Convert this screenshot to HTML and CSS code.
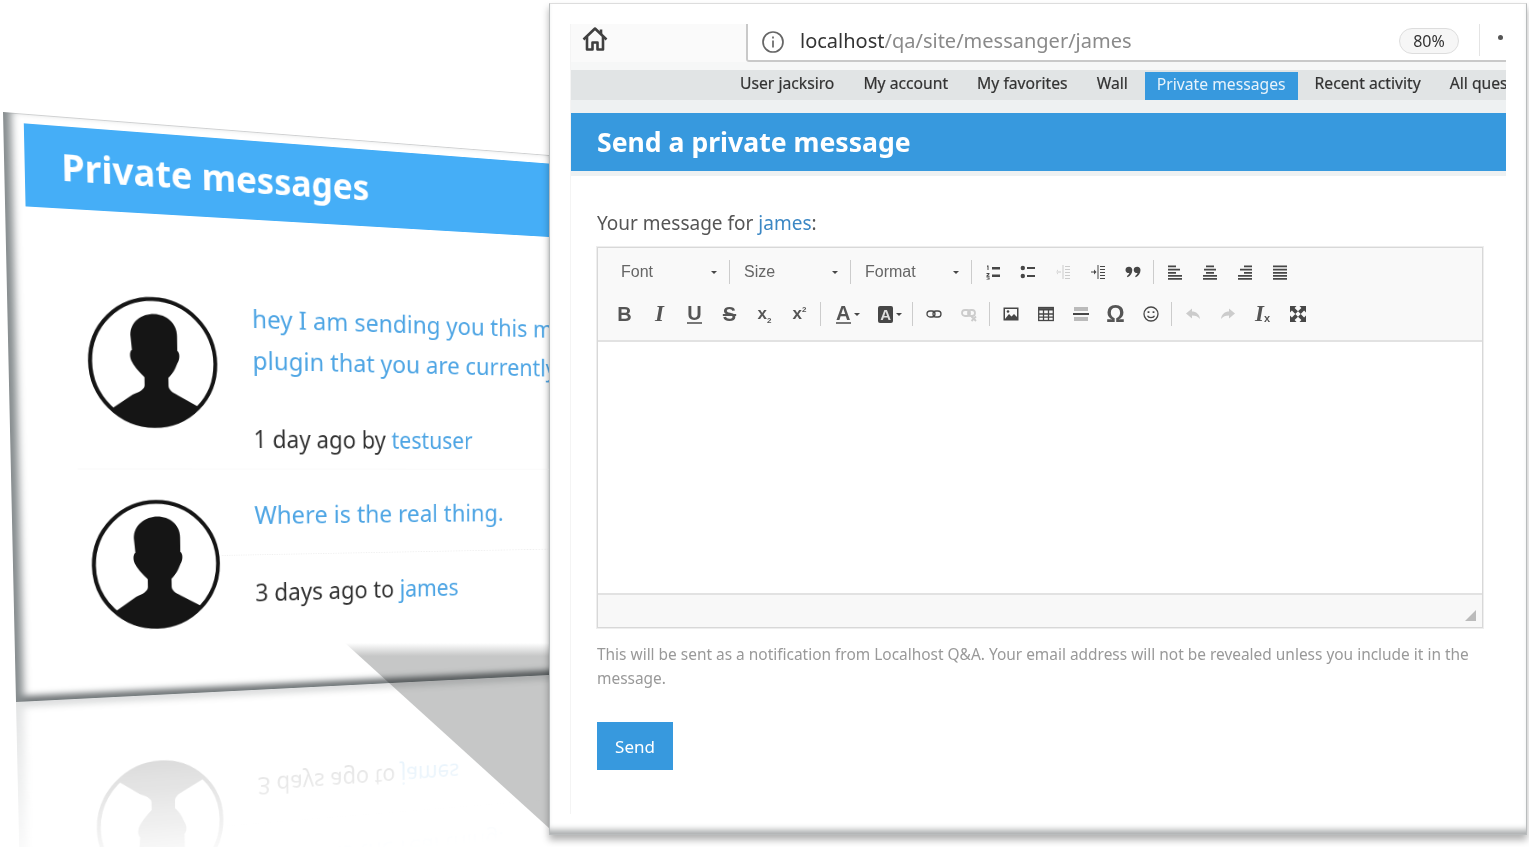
FILE: index.html
```html
<!DOCTYPE html>
<html lang="en">
<head>
    <meta charset="UTF-8">
    <title>Private messages</title>
    <link rel="stylesheet" href="styles.css">
</head>
<body>
    <svg class="defs" width="0" height="0">
        <symbol id="avatar" viewBox="0 0 100 100">
            <circle cx="50" cy="50" r="47" fill="#fff" stroke="#151515" stroke-width="3"/>
            <path fill="#151515" d="M51 14C60 14 68 20 68 30L68 41C70 42 70 47 68 50C66 55 64 58 61 61L61 67C61 70 64 72 68 74L83 82C75 92 63 97 50 97C37 97 26 92 19 84L34 74C39 72 43 70 43 67L43 61C40 58 36 54 34 50C32 47 32 42 34 41L33 30C33 20 42 14 51 14Z"/>
        </symbol>
    </svg>

    <!-- back window, tilted -->
    <section class="panel">
        <h2 class="panel-title">Private messages</h2>
        <div class="pm-row pm-row-first">
            <svg class="pm-avatar"><use href="#avatar"/></svg>
            <div>
                <p class="pm-text">hey I am sending you this message to tell you about the<br>plugin that you are currently using on your site</p>
                <p class="pm-meta pm-meta-first">1 day ago by <a>testuser</a></p>
            </div>
        </div>
        <div class="pm-row pm-row-second">
            <svg class="pm-avatar"><use href="#avatar"/></svg>
            <div>
                <p class="pm-text pm-text-short">Where is the real thing.</p>
                <p class="pm-meta">3 days ago to <a>james</a></p>
            </div>
        </div>
    </section>

    <div class="wedge"></div>

    <!-- front window -->
    <section class="window">
        <div class="page">
            <div class="browser-bar">
                <div class="home-box">
                    <svg width="28" height="28" viewBox="0 0 28 28" fill="none" stroke="#404040" stroke-width="2.6" stroke-linejoin="round"><path d="M2.500 14.500L14 3.500L25.500 14.500"/><path d="M20 4.500V9"/><path d="M6 12V24.500H11.500V17.500H16.500V24.500H22V12"/></svg>
                </div>
                <div class="address">
                    <svg width="24" height="24" viewBox="0 0 24 24" fill="none" stroke="#666" stroke-width="1.7"><circle cx="12" cy="12" r="10"/><path d="M12 10.500V17.500"/><path d="M12 6.500V8.500"/></svg>
                    <span class="url"><b>localhost</b>/qa/site/messanger/james</span>
                    <span class="zoom-pill">80%</span>
                </div>
                <div class="bar-end"><i></i></div>
            </div>

            <nav class="nav">
                <a>User jacksiro</a>
                <a>My account</a>
                <a>My favorites</a>
                <a>Wall</a>
                <a class="active">Private messages</a>
                <a>Recent activity</a>
                <a>All questions</a>
            </nav>

            <h1 class="title">Send a private message</h1>

            <div class="content">
                <p class="message-for">Your message for <a>james</a>:</p>

                <div class="editor">
                    <div class="toolbar">
                        <div class="tb-row tb-row-top">
                            <span class="tb-combo">Font<i class="caret"></i></span><span class="tb-sep"></span>
                            <span class="tb-combo">Size<i class="caret"></i></span><span class="tb-sep"></span>
                            <span class="tb-combo">Format<i class="caret"></i></span><span class="tb-sep"></span>
                            <span class="tb-btn"><svg viewBox="0 0 16 16"><path d="M2 1.500H3.500V6H2.500V2.700H2ZM1.500 9H4.500V10L3 11.700H4.600V12.700H1.400V11.800L3.200 10H1.500ZM1.500 13.400H4.600V15.500H1.500V14.900H3.600V14.700H2.400V14.200H3.600V14H1.500Z"/><path d="M7 3H15V5.500H7ZM7 10.500H15V13H7Z"/></svg></span>
                            <span class="tb-btn"><svg viewBox="0 0 16 16"><circle cx="2.800" cy="4" r="2.200"/><circle cx="2.800" cy="12" r="2.200"/><path d="M7 3H15V5H7ZM7 11H15V13H7Z"/></svg></span>
                            <span class="tb-btn off"><svg viewBox="0 0 16 16"><path d="M7.500 1H8.500V15H7.500ZM10 2H15V3H10ZM10 5H15V6H10ZM10 8H15V9H10ZM10 11H15V12H10ZM10 14H15V15H10ZM1 7.500H6V8.500H1ZM3 5.500L1 8L3 10.500Z"/></svg></span>
                            <span class="tb-btn"><svg viewBox="0 0 16 16"><path d="M7.500 1H8.500V15H7.500ZM10 2H15V3H10ZM10 5H15V6H10ZM10 8H15V9H10ZM10 11H15V12H10ZM10 14H15V15H10ZM1 7.500H5V8.500H1ZM4 5.500L6.500 8L4 10.500Z"/></svg></span>
                            <span class="tb-btn"><svg viewBox="0 0 16 16"><path d="M0.500 6C0.500 4 2 2.800 4 2.800C6 2.800 7.300 4.200 7.300 6C7.300 9 5.500 11.800 2.600 13.300L1.900 12.200C3.300 11.200 4.100 10.200 4.300 9.100C2 9.200 0.500 8 0.500 6ZM8.700 6C8.700 4 10.200 2.800 12.200 2.800C14.200 2.800 15.500 4.200 15.500 6C15.500 9 13.700 11.800 10.800 13.300L10.100 12.200C11.500 11.200 12.300 10.200 12.500 9.100C10.200 9.200 8.700 8 8.700 6Z"/></svg></span>
                            <span class="tb-sep"></span>
                            <span class="tb-btn"><svg viewBox="0 0 16 16"><path d="M1 1.500H9V3.200H1ZM1 4.700H13V6.400H1ZM1 8H9V9.700H1ZM1 11H15V12.700H1ZM1 14H15V15.700H1Z"/></svg></span>
                            <span class="tb-btn"><svg viewBox="0 0 16 16"><path d="M4 1.500H12V3.200H4ZM2 4.700H14V6.400H2ZM4 8H12V9.700H4ZM1 11H15V12.700H1ZM1 14H15V15.700H1Z"/></svg></span>
                            <span class="tb-btn"><svg viewBox="0 0 16 16"><path d="M7 1.500H15V3.200H7ZM3 4.700H15V6.400H3ZM7 8H15V9.700H7ZM1 11H15V12.700H1ZM1 14H15V15.700H1Z"/></svg></span>
                            <span class="tb-btn"><svg viewBox="0 0 16 16"><path d="M1 1.500H15V3.200H1ZM1 4.700H15V6.400H1ZM1 8H15V9.700H1ZM1 11H15V12.700H1ZM1 14H15V15.700H1Z"/></svg></span>
                        </div>
                        <div class="tb-row tb-row-bottom">
                            <span class="tb-btn tb-glyph"><b>B</b></span>
                            <span class="tb-btn tb-glyph tb-serif"><b><i>I</i></b></span>
                            <span class="tb-btn tb-glyph"><b class="under">U</b></span>
                            <span class="tb-btn tb-glyph"><b class="strike">S</b></span>
                            <span class="tb-btn tb-glyph tb-script"><b>x<sub>2</sub></b></span>
                            <span class="tb-btn tb-glyph tb-script"><b>x<sup>2</sup></b></span>
                            <span class="tb-sep"></span>
                            <span class="tb-btn tb-color tb-glyph"><b class="under">A</b><i class="caret"></i></span>
                            <span class="tb-btn tb-color tb-glyph"><b class="boxed">A</b><i class="caret"></i></span>
                            <span class="tb-sep"></span>
                            <span class="tb-btn"><svg class="line" viewBox="0 0 16 16"><rect x="1" y="5" width="8" height="6" rx="3"/><rect x="7" y="5" width="8" height="6" rx="3"/></svg></span>
                            <span class="tb-btn off"><svg class="line" viewBox="0 0 16 16"><rect x="1" y="4" width="8" height="6" rx="3"/><rect x="7" y="4" width="7" height="6" rx="3"/><path d="M10.500 10.500L15 15M15 10.500L10.500 15"/></svg></span>
                            <span class="tb-sep"></span>
                            <span class="tb-btn"><svg viewBox="0 0 16 16"><path d="M0.500 1.500H15.500V14.500H0.500ZM2 3V13H14V3Z" fill-rule="evenodd"/><path d="M2 13L6 8L8.500 10.500L11 8L14 11V13Z"/><circle cx="5" cy="5.500" r="1.300"/></svg></span>
                            <span class="tb-btn"><svg class="line" viewBox="0 0 16 16"><rect x="0.700" y="1.500" width="14.600" height="13"/><path d="M0.700 3.300H15.300" stroke-width="2.400"/><path d="M0.700 8H15.300M0.700 11.200H15.300M5.500 4V14.500M10.500 4V14.500"/></svg></span>
                            <span class="tb-btn"><svg viewBox="0 0 16 16"><path class="pale" d="M1 1H15V5H1ZM1 11H15V15H1Z"/><path d="M0 7H16V9H0Z"/></svg></span>
                            <span class="tb-btn tb-glyph tb-omega">&Omega;</span>
                            <span class="tb-btn"><svg class="line" viewBox="0 0 16 16"><circle cx="8" cy="8" r="7"/><path d="M4.500 9.800C5.500 12.300 10.500 12.300 11.500 9.800"/><path d="M5.500 5.200V7M10.500 5.200V7" stroke-width="1.800"/></svg></span>
                            <span class="tb-sep"></span>
                            <span class="tb-btn off"><svg viewBox="0 0 16 16"><path d="M1 7.500L7 2.500V5.500C11 5.500 14.500 8 15 13C13 10.500 10.500 9.500 7 9.500V12.500Z"/></svg></span>
                            <span class="tb-btn off"><svg viewBox="0 0 16 16"><path d="M15 7.500L9 2.500V5.500C5 5.500 1.500 8 1 13C3 10.500 5.500 9.500 9 9.500V12.500Z"/></svg></span>
                            <span class="tb-btn tb-glyph tb-serif tb-clear"><b><i>I</i></b><small>x</small></span>
                            <span class="tb-btn"><svg viewBox="0 0 16 16"><path d="M0 0H6.500L4.600 1.900L8 5.300L5.300 8L1.900 4.600L0 6.500ZM16 0V6.500L14.100 4.600L10.700 8L8 5.300L11.400 1.900L9.500 0ZM0 16V9.500L1.900 11.400L5.300 8L8 10.700L4.600 14.100L6.500 16ZM16 16H9.500L11.400 14.100L8 10.700L10.700 8L14.100 11.400L16 9.500Z"/></svg></span>
                        </div>
                    </div>
                    <div class="editor-body"></div>
                    <div class="editor-foot"><i class="resizer"></i></div>
                </div>

                <p class="hint">This will be sent as a notification from Localhost Q&amp;A. Your email address will not be revealed unless you include it in the message.</p>

                <button class="send">Send</button>
            </div>
        </div>
    </section>
</body>
</html>
```

FILE: styles.css
```css
body {
    margin: 0;
    width: 1529px;
    height: 847px;
    position: relative;
    overflow: hidden;
    background-color: #fff;
    font-family: "Noto Sans", sans-serif;
    color: #333;
}

p, h1, h2 {
    margin: 0;
}

.defs {
    position: absolute;
}

/* back window: a flat 630x620 box pushed onto the tilted quad */
.panel {
    position: absolute;
    left: 0;
    top: 0;
    width: 630px;
    height: 620px;
    overflow: hidden;
    box-sizing: border-box;
    padding-top: 10px;
    background-color: #fff;
    box-shadow: inset 12px 0 8px -4px #868c8e, inset 0 -10px 7px -4px #6f7476, inset 0 1px 0 #ddd;
    transform-origin: 0 0;
    transform: matrix3d(.98508, .10168, 0, .00021568, .021597, .97923, 0, .00003934, 0, 0, 1, 0, 3, 112, 0, 1);
    -webkit-box-reflect: below 0 linear-gradient(transparent 68%, rgba(255, 255, 255, .24));
    filter: blur(.4px);
}

.panel-title {
    height: 86px;
    margin-left: 21px;
    padding-left: 38px;
    background-color: #45aef7;
    color: #fff;
    font-size: 39.5px;
    font-weight: 700;
    line-height: 84px;
    white-space: nowrap;
}

.pm-row {
    display: grid;
    grid-template-columns: 146px 1fr;
    column-gap: 38px;
    padding-left: 81px;
    white-space: nowrap;
}

.pm-row-first {
    margin-top: 85px;
    padding-bottom: 11px;
    background: linear-gradient(#f9f9f9, #f9f9f9) 70px 100% / 100% 1px no-repeat;
}

.pm-row-second {
    padding-top: 27px;
}

.pm-avatar {
    width: 146px;
    height: 146px;
    margin-top: 2px;
}

.pm-row-second .pm-avatar {
    margin-top: 4px;
}

.pm-text {
    color: #4ea5e4;
    font-size: 28px;
    line-height: 46px;
}

.pm-text-short {
    padding-bottom: 22px;
    margin-left: -38px;
    padding-left: 38px;
    margin-bottom: 19px;
    border-bottom: 1px dotted #eee;
}

.pm-meta {
    font-size: 26.5px;
    line-height: 46px;
    color: #333;
}

.pm-meta-first {
    margin-top: 42px;
}

.pm-meta a {
    color: #4ea5e4;
}

/* shadow falling across the back window */
.wedge {
    position: absolute;
    left: 345px;
    top: 643px;
    width: 205px;
    height: 186px;
    background: linear-gradient(#fff, #c6c7c7 7%);
    clip-path: polygon(0 0, 100% 0, 100% 100%);
    mix-blend-mode: multiply;
}

/* front window */
.window {
    position: absolute;
    left: 549px;
    top: 3px;
    width: 978px;
    height: 832px;
    box-sizing: border-box;
    padding: 20px;
    background-color: #fff;
    border: 1px solid #b9bcbd;
    border-top-color: #ddd;
    box-shadow: 0 5px 7px rgba(0, 0, 0, .3), inset 0 -8px 6px -4px #a8abac;
}

.page {
    height: 100%;
    overflow: hidden;
    border-left: 1px solid #f4f4f4;
    filter: blur(.45px);
}

.browser-bar {
    display: flex;
    height: 38px;
}

.home-box {
    width: 175px;
    padding: 1px 0 0 10px;
    box-sizing: border-box;
    background-color: #fafafa;
}

.address {
    flex: 1;
    display: flex;
    align-items: center;
    gap: 15px;
    padding: 0 20px 0 13px;
    border-left: 2px solid #c9c9c9;
    border-bottom: 2px solid #c9c9c9;
    border-bottom-left-radius: 3px;
}

.url {
    flex: 1;
    font-size: 20px;
    line-height: 24px;
    margin-top: -2px;
    color: #8a8a8a;
    white-space: nowrap;
}

.url b {
    font-weight: 400;
    color: #333;
}

.zoom-pill {
    width: 58px;
    height: 24px;
    margin-top: -2px;
    border: 1px solid #ddd;
    border-radius: 13px;
    background-color: #f6f6f6;
    text-align: center;
    font-size: 16px;
    line-height: 24px;
    color: #333;
}

.bar-end {
    width: 27px;
    display: flex;
    justify-content: flex-end;
    padding: 11px 3px 0 0;
    box-sizing: border-box;
    border-bottom: 2px solid #c9c9c9;
    background: linear-gradient(#e4e4e4, #e4e4e4) 0 0 / 1px 32px no-repeat;
}

.bar-end i {
    width: 5px;
    height: 5px;
    border-radius: 50%;
    background-color: #555;
}

.nav {
    display: flex;
    gap: 5px;
    height: 30px;
    padding: 8px 0 0 157px;
    background: linear-gradient(#f6f7f7 8px, #e1e4e5 8px);
    white-space: nowrap;
    overflow: hidden;
    font-size: 15.7px;
    line-height: 27px;
    color: #333;
}

.nav a {
    padding: 0 12px;
    -webkit-text-stroke: .2px #333;
}

.nav a.active {
    margin-top: 2px;
    line-height: 24px;
    background-color: #3799de;
    color: #e8f3fb;
    -webkit-text-stroke: 0;
}

.title {
    margin-top: 13px;
    height: 58px;
    padding-left: 26px;
    background-color: #3799de;
    color: #fff;
    font-size: 26.6px;
    font-weight: 700;
    line-height: 58px;
    box-shadow: 0 -13px 0 #eef1f2, 0 5px 0 #eef1f2;
}

.content {
    padding: 39px 0 0 26px;
    width: 886px;
}

.message-for {
    font-size: 19px;
    line-height: 26px;
    color: #555;
}

.message-for a {
    color: #3b87c4;
}

.editor {
    margin-top: 11px;
    border: 1px solid #d8d8d8;
    outline: 1px solid #eee;
}

.toolbar {
    height: 86px;
    padding: 3px 0;
    background-color: #f9f9f9;
    border-bottom: 2px solid #e2e2e2;
}

.tb-row {
    display: flex;
    align-items: center;
    height: 42px;
}

.tb-row-top {
    padding-left: 14px;
}

.tb-row-bottom {
    padding-left: 9px;
}

.tb-combo {
    width: 114px;
    box-sizing: border-box;
    display: flex;
    align-items: center;
    justify-content: space-between;
    padding: 0 9px 0 11px;
    font-family: "Liberation Sans", sans-serif;
    font-size: 16px;
    color: #666;
}

.tb-combo:first-child {
    padding-left: 9px;
}

.caret {
    width: 0;
    height: 0;
    border-left: 3px solid transparent;
    border-right: 3px solid transparent;
    border-top: 3px solid #474747;
}

.tb-sep {
    flex: none;
    width: 1px;
    height: 24px;
    margin: 0 3px;
    background-color: #ccc;
}

.tb-btn {
    flex: none;
    width: 35px;
    display: flex;
    align-items: center;
    justify-content: center;
}

.tb-btn svg {
    width: 16px;
    height: 16px;
    fill: #474747;
}

.tb-btn svg.line {
    fill: none;
    stroke: #474747;
    stroke-width: 1.3;
}

.tb-btn svg .pale {
    fill: #bbb;
}

.tb-btn.off svg {
    fill: #ccc;
}

.tb-btn.off svg.line {
    fill: none;
    stroke: #ccc;
    stroke-width: 1.8;
}

.tb-glyph {
    font-family: "Liberation Sans", sans-serif;
    font-size: 20px;
    line-height: 20px;
    color: #555;
}

.tb-serif {
    font-family: "Liberation Serif", serif;
    font-size: 23px;
}

.under {
    border-bottom: 2px solid #777;
    line-height: 18px;
}

.strike {
    text-decoration: line-through;
}

.tb-script b {
    font-size: 17px;
}

.tb-script sub, .tb-script sup {
    font-size: 8px;
    line-height: 0;
}

.tb-color {
    width: 42.5px;
    box-sizing: border-box;
    justify-content: flex-end;
    gap: 3px;
    padding-right: 7px;
}

.boxed {
    padding: 0 2px;
    border-radius: 2px;
    background-color: #474747;
    color: #ddd;
    font-size: 15px;
    line-height: 17px;
}

.tb-omega {
    font-size: 23px;
    font-weight: 700;
}

.tb-clear small {
    font-family: "Liberation Sans", sans-serif;
    font-size: 11px;
    font-weight: 700;
    margin-top: 8px;
}

.editor-body {
    height: 251px;
    background-color: #fff;
}

.editor-foot {
    height: 34px;
    display: flex;
    justify-content: flex-end;
    align-items: flex-end;
    padding: 0 6px 6px 0;
    box-sizing: border-box;
    border-top: 2px solid #e2e2e2;
    background-color: #f8f8f8;
}

.resizer {
    width: 0;
    height: 0;
    border-left: 11px solid transparent;
    border-bottom: 11px solid #bbb;
}

.hint {
    margin-top: 14px;
    font-size: 15.45px;
    line-height: 24px;
    color: #999;
}

.send {
    display: block;
    margin-top: 32px;
    width: 76px;
    height: 48px;
    border: none;
    background-color: #3799de;
    color: #fff;
    font-family: inherit;
    font-size: 17px;
    cursor: pointer;
}
```
